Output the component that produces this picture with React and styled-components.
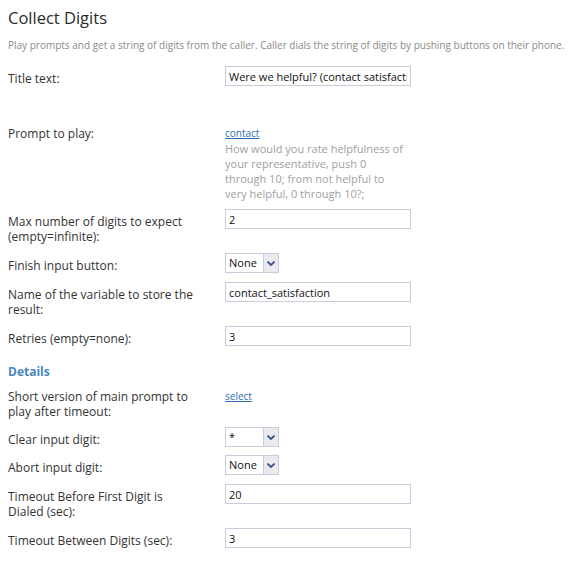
import React from "react";
import styled, { createGlobalStyle } from "styled-components";

const Global = createGlobalStyle`
  html, body { margin: 0; padding: 0; background: #fff; }
  body { font-family: "Open Sans", "Noto Sans", Arial, sans-serif; color: #333; }
`;

const Page = styled.div`
  padding: 6px 8px 0 8px;
`;

const Title = styled.h1`
  margin: 0;
  font-size: 16.5px;
  font-weight: 400;
  line-height: 24px;
  color: #2b2b2b;
`;

const Subtitle = styled.p`
  margin: 8px 0 0 0;
  font-size: 10px;
  line-height: 14px;
  color: #8a8a8a;
  white-space: nowrap;
`;

const Form = styled.div`
  display: flex;
  flex-direction: column;
  margin-top: 14px;
`;

const Row = styled.div`
  display: grid;
  grid-template-columns: 217px 1fr;
  margin-bottom: ${(p) => (p.$gap != null ? p.$gap : 9)}px;
`;

const Label = styled.div`
  padding: 5px 31px 0 0;
  font-size: 12px;
  line-height: 15px;
  color: #333;
`;

const Field = styled.div`
  display: flex;
  flex-direction: column;
  align-items: flex-start;
  padding-top: ${(p) => p.$top || 0}px;
`;

const TextInput = styled.input`
  box-sizing: border-box;
  width: 186px;
  height: 20px;
  border: 1px solid #c9cddb;
  padding: 0 3px;
  font-family: "Open Sans", "Noto Sans", Arial, sans-serif;
  font-size: 11px;
  color: #111;
  background: #fff;
  outline: none;
  margin: 0;
`;

const SelectBox = styled.div`
  box-sizing: border-box;
  width: 54px;
  height: 20px;
  border: 1px solid #c9cddb;
  display: flex;
  align-items: stretch;
  background: #fff;
`;

const SelectValue = styled.div`
  flex: 1;
  padding-left: 3px;
  font-size: 11px;
  line-height: 18px;
  color: #111;
`;

const SelectArrow = styled.div`
  width: 14px;
  border-left: 1px solid #c9cddb;
  background: #eaeaef;
  display: flex;
  align-items: center;
  justify-content: center;
`;

const Link = styled.a`
  font-size: 10px;
  line-height: 15px;
  color: #2f6fb2;
  text-decoration: underline;
  cursor: pointer;
`;

const Desc = styled.div`
  font-size: 11px;
  line-height: 15px;
  color: #a0a0a0;
  width: 180px;
`;

const Section = styled.div`
  font-size: 12px;
  font-weight: 700;
  line-height: 15px;
  color: #4a86c4;
  margin: 18px 0 5px 0;
`;

function Chevron() {
  return (
    <svg width="8" height="5" viewBox="0 0 8 5">
      <path d="M0.5 0.6 L4 4 L7.5 0.6" fill="none" stroke="#3e5a8a" strokeWidth="1.9" />
    </svg>
  );
}

function Select({ value }) {
  return (
    <SelectBox>
      <SelectValue>{value}</SelectValue>
      <SelectArrow>
        <Chevron />
      </SelectArrow>
    </SelectBox>
  );
}

export default function App() {
  return (
    <>
      <Global />
      <Page>
        <Title>Collect Digits</Title>
        <Subtitle>
          Play prompts and get a string of digits from the caller. Caller dials the string of digits by pushing buttons on their phone.
        </Subtitle>
        <Form>
          <Row $gap={35}>
            <Label>Title text:</Label>
            <Field>
              <TextInput readOnly value="Were we helpful? (contact satisfaction)" />
            </Field>
          </Row>
          <Row $gap={8}>
            <Label>Prompt to play:</Label>
            <Field $top={5}>
              <Link>contact</Link>
              <Desc>
                How would you rate helpfulness of your representative, push 0 through 10; from not helpful to very helpful, 0 through 10?;
              </Desc>
            </Field>
          </Row>
          <Row>
            <Label>Max number of digits to expect (empty=infinite):</Label>
            <Field>
              <TextInput readOnly value="2" />
            </Field>
          </Row>
          <Row>
            <Label>Finish input button:</Label>
            <Field>
              <Select value="None" />
            </Field>
          </Row>
          <Row>
            <Label>Name of the variable to store the result:</Label>
            <Field>
              <TextInput readOnly value="contact_satisfaction" />
            </Field>
          </Row>
          <Row $gap={0}>
            <Label>Retries (empty=none):</Label>
            <Field>
              <TextInput readOnly value="3" />
            </Field>
          </Row>
          <Section>Details</Section>
          <Row $gap={8}>
            <Label>Short version of main prompt to play after timeout:</Label>
            <Field $top={5}>
              <Link>select</Link>
            </Field>
          </Row>
          <Row $gap={8}>
            <Label>Clear input digit:</Label>
            <Field>
              <Select value="*" />
            </Field>
          </Row>
          <Row>
            <Label>Abort input digit:</Label>
            <Field>
              <Select value="None" />
            </Field>
          </Row>
          <Row>
            <Label>Timeout Before First Digit is Dialed (sec):</Label>
            <Field>
              <TextInput readOnly value="20" />
            </Field>
          </Row>
          <Row>
            <Label>Timeout Between Digits (sec):</Label>
            <Field>
              <TextInput readOnly value="3" />
            </Field>
          </Row>
        </Form>
      </Page>
    </>
  );
}
